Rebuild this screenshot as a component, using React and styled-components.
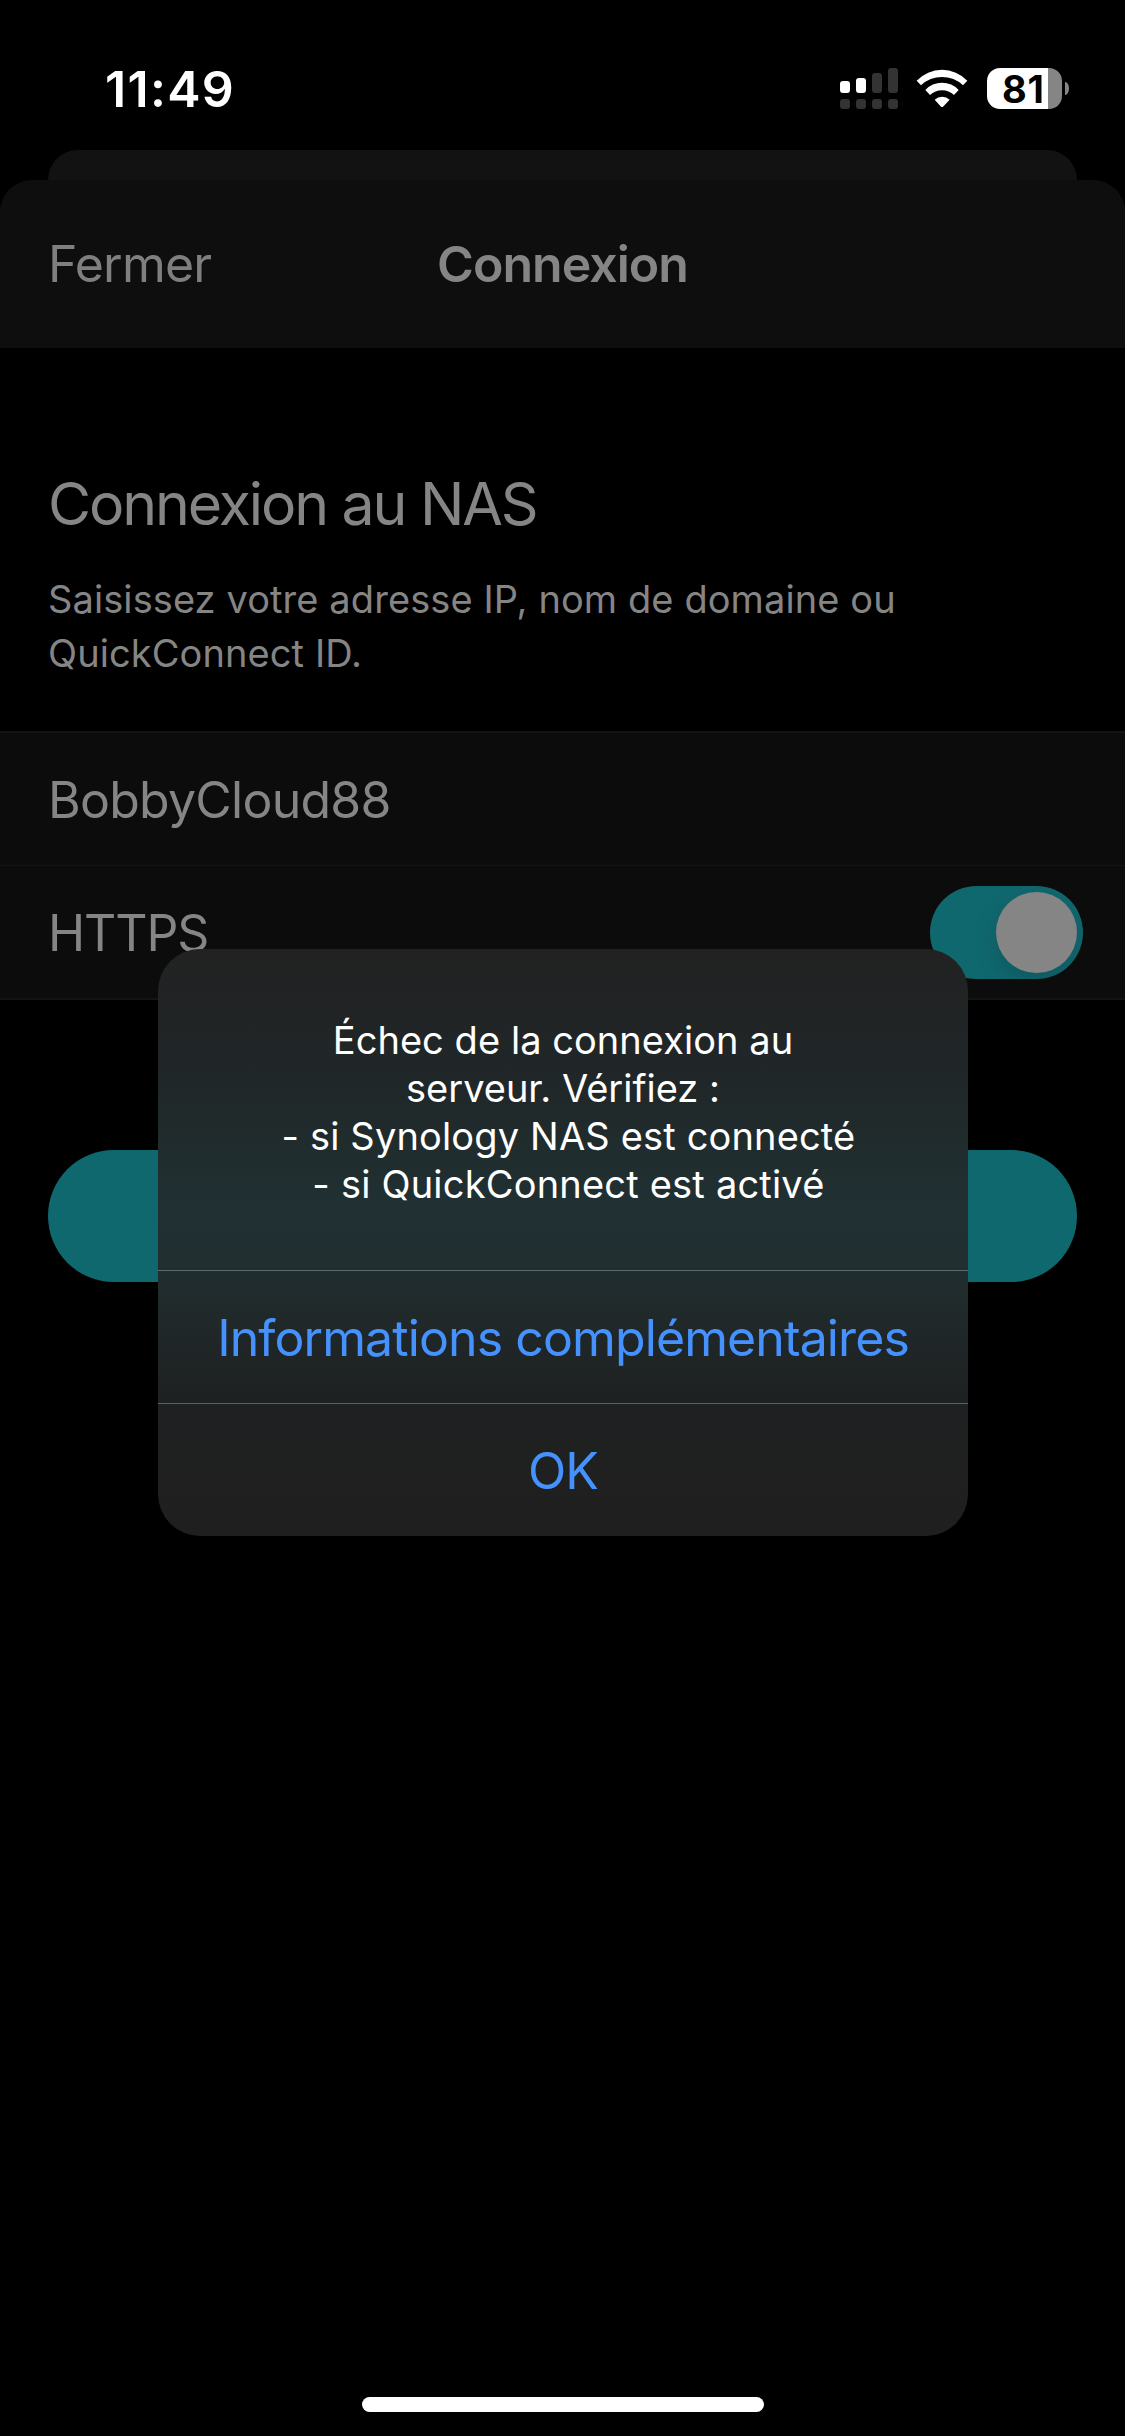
import styled, { createGlobalStyle } from "styled-components";

const GlobalStyle = createGlobalStyle`
  * {
    box-sizing: border-box;
  }
  body {
    margin: 0;
    background: #000;
    font-family: Inter, "Liberation Sans", sans-serif;
    -webkit-font-smoothing: antialiased;
  }
`;

// height of each bar of the two signal rows, and whether it is lit
const bars = [
  { h: 12, on: true },
  { h: 15, on: true },
  { h: 20, on: false },
  { h: 25, on: false },
];

const message = [
  { text: "Échec de la connexion au", ls: 0.05 },
  { text: "serveur. Vérifiez :", ls: 0 },
  { text: " - si Synology NAS est connecté", ls: 0.16 },
  { text: " - si QuickConnect est activé", ls: 0.2 },
];

function WifiIcon() {
  return (
    <svg width="52" height="39" viewBox="289 57 156 117" fill="#fff">
      <path d="M291 92 A105 105 0 0 1 443 92 L430 106 A91 91 0 0 0 304 106 Z" />
      <path d="M317 120 A68 68 0 0 1 417 120 L403 135 A53 53 0 0 0 331 135 Z" />
      <path d="M345 149 A34 34 0 0 1 390 149 L370 170 Q367 172 364 170 Z" />
    </svg>
  );
}

export default function App() {
  return (
    <>
      <GlobalStyle />
      <Screen>
        <StatusBar>
          <Clock>11:49</Clock>
          <StatusIcons>
            <Signal>
              {bars.map((b, i) => (
                <SignalColumn key={i}>
                  <SignalBar $h={b.h} $on={b.on} />
                  <SignalBar $h={10} />
                </SignalColumn>
              ))}
            </Signal>
            <WifiIcon />
            <BatteryWrapper>
              <Battery>81</Battery>
              <BatteryTip />
            </BatteryWrapper>
          </StatusIcons>
        </StatusBar>

        <BackSheet />
        <Header>
          <Close>Fermer</Close>
          <HeaderTitle>Connexion</HeaderTitle>
        </Header>

        <Intro>
          <Title>Connexion au NAS</Title>
          <Description>
            Saisissez votre adresse IP, nom de domaine ou
            <br />
            QuickConnect ID.
          </Description>
        </Intro>

        <List>
          <Row>
            <Label $ls={-0.75}>BobbyCloud88</Label>
          </Row>
          <Row>
            <Label $ls={-1.1}>HTTPS</Label>
            <Switch>
              <Knob />
            </Switch>
          </Row>
        </List>

        <SubmitButton />

        <Alert>
          <AlertBody>
            {message.map((m) => (
              <AlertLine key={m.text} $ls={m.ls}>
                {m.text}
              </AlertLine>
            ))}
          </AlertBody>
          <AlertButton $line="#576a6c">Informations complémentaires</AlertButton>
          <AlertButton $line="#5d6162">OK</AlertButton>
        </Alert>

        <HomeIndicator />
      </Screen>
    </>
  );
}

const Screen = styled.div`
  position: relative;
  display: flex;
  flex-direction: column;
  width: 1125px;
  height: 2436px;
  overflow: hidden;
  background: #000;
  color: #858585;
`;

const StatusBar = styled.div`
  display: flex;
  justify-content: space-between;
  height: 150px;
  padding: 68px 56px 0 105px;
`;

const Clock = styled.div`
  height: 42px;
  line-height: 42px;
  font-size: 50px;
  font-weight: 600;
  letter-spacing: 1.3px;
  color: #fff;
`;

const StatusIcons = styled.div`
  display: flex;
  align-items: flex-start;
  height: 41px;

  svg {
    margin: 1px 19px 0 18px;
  }
`;

const Signal = styled.div`
  display: flex;
  gap: 6px;
`;

const SignalColumn = styled.div`
  display: flex;
  flex-direction: column;
  justify-content: flex-end;
  gap: 6px;
  height: 41px;
`;

const SignalBar = styled.div`
  width: 10px;
  height: ${(props) => props.$h}px;
  border-radius: 3px;
  background: ${(props) => (props.$on ? "#fff" : "#333")};
`;

const BatteryWrapper = styled.div`
  display: flex;
  align-items: center;
  gap: 3px;
`;

const Battery = styled.div`
  width: 75px;
  height: 41px;
  padding-left: 15px;
  border-radius: 13px;
  background: linear-gradient(90deg, #fff 61px, #858585 61px);
  color: #000;
  font-size: 38px;
  font-weight: 700;
  letter-spacing: 0.8px;
  line-height: 42px;
`;

const BatteryTip = styled.div`
  width: 4px;
  height: 13px;
  border-radius: 0 4px 4px 0 / 0 7px 7px 0;
  background: #858585;
`;

const BackSheet = styled.div`
  height: 30px;
  margin: 0 48px;
  border-radius: 30px 30px 0 0;
  background: #121212;
`;

const Header = styled.div`
  display: grid;
  grid-template-columns: 1fr auto 1fr;
  align-items: center;
  height: 168px;
  padding: 0 48px;
  border-radius: 32px 32px 0 0;
  background: #0e0e0e;
  font-size: 50px;
`;

const Close = styled.div`
  color: #7f7f7f;
  letter-spacing: -0.8px;
`;

const HeaderTitle = styled.div`
  font-weight: 600;
  letter-spacing: -0.95px;
`;

const Intro = styled.div`
  height: 383px;
  padding: 120px 48px 0;
`;

const Title = styled.h1`
  margin: 0;
  font-size: 59px;
  font-weight: 400;
  letter-spacing: -2.1px;
  line-height: 72px;
`;

const Description = styled.p`
  margin: 32px 0 0;
  font-size: 38px;
  letter-spacing: 0.09px;
  line-height: 54px;
  white-space: nowrap;
`;

const List = styled.div`
  border-top: 2px solid #141414;
  border-bottom: 2px solid #141414;
  background: #0c0c0c;
`;

const Row = styled.div`
  display: flex;
  align-items: center;
  justify-content: space-between;
  height: 132px;
  padding: 0 42px 0 48px;

  & + & {
    height: 133px;
    border-top: 1px solid #141414;
  }
`;

const Label = styled.div`
  padding-top: 2px;
  font-size: 50px;
  letter-spacing: ${(props) => props.$ls}px;
`;

const Switch = styled.div`
  display: flex;
  justify-content: flex-end;
  width: 153px;
  height: 93px;
  padding: 6px;
  border-radius: 47px;
  background: #10686f;
  overflow: hidden;
`;

const Knob = styled.div`
  width: 81px;
  height: 81px;
  border-radius: 50%;
  background: #858585;
  box-shadow: 0 9px 24px rgba(0, 0, 0, 0.15);
`;

const SubmitButton = styled.div`
  height: 132px;
  margin: 150px 48px 0;
  border-radius: 66px;
  background: #10686f;
`;

const Alert = styled.div`
  position: absolute;
  top: 949px;
  left: 158px;
  width: 810px;
  height: 587px;
  border-radius: 42px;
  overflow: hidden;
  background: linear-gradient(
    180deg,
    #222221 0,
    #212324 50px,
    #20282a 150px,
    #202d2e 210px,
    #203134 265px,
    #202e2f 322px,
    #202728 385px,
    #1e2122 450px,
    #1f2020 510px,
    #1f1f1f 587px
  );
  text-align: center;
`;

const AlertBody = styled.div`
  height: 321px;
  padding-top: 67px;
`;

const AlertLine = styled.div`
  color: #fff;
  font-size: 38px;
  line-height: 48px;
  letter-spacing: ${(props) => props.$ls}px;
  white-space: pre;
`;

const AlertButton = styled.div`
  height: 133px;
  padding-top: 1px;
  border-top: 1px solid ${(props) => props.$line};
  color: #4592ff;
  font-size: 50px;
  letter-spacing: -0.9px;
  line-height: 132px;
`;

const HomeIndicator = styled.div`
  width: 402px;
  height: 15px;
  margin: auto auto 24px 362px;
  border-radius: 8px;
  background: #fff;
`;
